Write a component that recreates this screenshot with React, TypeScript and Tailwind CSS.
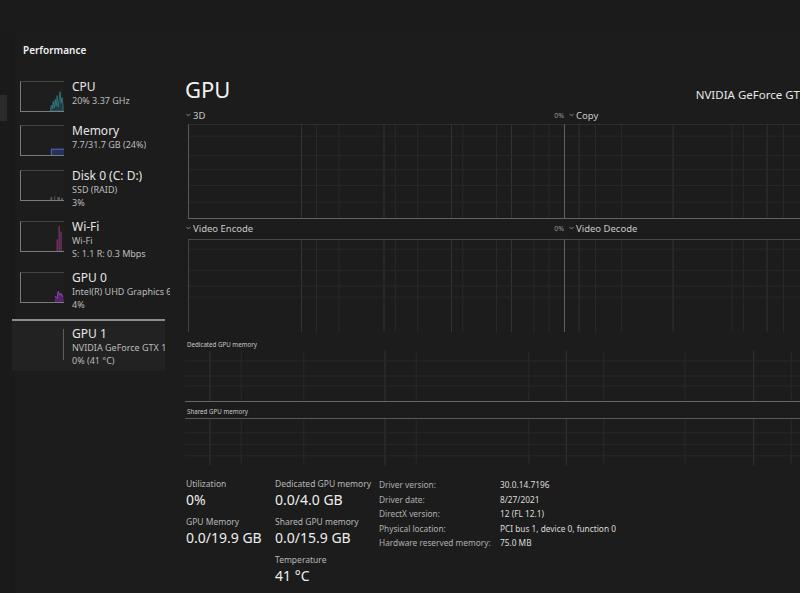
import React from "react";

const FONT = { fontFamily: '"Noto Sans", "Open Sans", sans-serif' };

function Grid({ v, h, className }: { v: number[]; h: number[]; className?: string }) {
  return (
    <svg className={className} viewBox="0 0 100 100" preserveAspectRatio="none">
      {v.map((x, i) => (
        <line key={"v" + i} x1={x} y1={0} x2={x} y2={100} stroke={i % 3 === 0 ? "#333333" : "#292929"} strokeWidth={1} vectorEffect="non-scaling-stroke" />
      ))}
      {h.map((y, i) => (
        <line key={"h" + i} x1={0} y1={y} x2={100} y2={y} stroke="#282828" strokeWidth={1} vectorEffect="non-scaling-stroke" />
      ))}
    </svg>
  );
}

function Thumb({ kind }: { kind: string }) {
  return (
    <div className="w-[44px] h-[31px] border-l border-b border-t border-l-[#7a7a7a] border-b-[#7a7a7a] border-t-[#444444] bg-[#1e1e1e] shrink-0">
      <svg className="w-full h-full" viewBox="0 0 44 30" preserveAspectRatio="none">
        {kind === "cpu" && (
          <path d="M30 30 L31 24 L32 28 L33 20 L34 27 L35 18 L36 25 L37 14 L38 26 L39 19 L40 10 L41 22 L42 16 L43 24 L43 30 Z" fill="#1c3c40" stroke="#35808a" strokeWidth="0.8" />
        )}
        {kind === "mem" && (
          <g>
            <rect x="31" y="24" width="13" height="6" fill="#26325c" />
            <line x1="31" y1="24" x2="44" y2="24" stroke="#5a70bd" strokeWidth="1" />
            <line x1="31" y1="24" x2="31" y2="30" stroke="#5a70bd" strokeWidth="1" />
          </g>
        )}
        {kind === "disk" && (
          <g fill="#555555">
            <rect x="30" y="27" width="2" height="3" />
            <rect x="34" y="26" width="1" height="4" />
            <rect x="37" y="27" width="3" height="3" />
            <rect x="41" y="28" width="2" height="2" />
          </g>
        )}
        {kind === "wifi" && (
          <g stroke="#9c3c80" strokeWidth="1">
            <line x1="39" y1="4" x2="39" y2="30" />
            <line x1="41" y1="10" x2="41" y2="30" />
            <line x1="37" y1="18" x2="37" y2="30" />
          </g>
        )}
        {kind === "gpu0" && (
          <g>
            <path d="M34 30 L35 24 L37 26 L38 19 L40 23 L41 21 L43 25 L44 30 Z" fill="#552470" />
            <path d="M35 24 L37 26 L38 19 L40 23 L41 21 L43 25" stroke="#9046bb" fill="none" strokeWidth="1" />
          </g>
        )}
      </svg>
    </div>
  );
}

function SideItem({ kind, title, lines, h }: { kind: string; title: string; lines: string[]; h: string }) {
  return (
    <div className={`flex items-start gap-[8px] pl-[5px] ${h}`}>
      <Thumb kind={kind} />
      <div className="flex flex-col -mt-[2px] whitespace-nowrap overflow-hidden">
        <div className="text-[12px] leading-[15px] text-[#e6e6e6]">{title}</div>
        {lines.map((l) => (
          <div key={l} className="text-[9px] leading-[13px] text-[#bcbcbc]">{l}</div>
        ))}
      </div>
    </div>
  );
}

function Chevron() {
  return (
    <svg width="5" height="4" viewBox="0 0 5 4" className="mb-[3px]">
      <path d="M0.5 0.8 L2.5 3 L4.5 0.8" stroke="#8a8a8a" strokeWidth="0.9" fill="none" />
    </svg>
  );
}

function EngineLabel({ name }: { name: string }) {
  return (
    <div className="flex items-center gap-[2px] text-[9.5px] leading-[14px] text-[#c8c8c8]">
      <Chevron />
      <span>{name}</span>
    </div>
  );
}

const V1 = [30, 34, 40, 52, 55, 61, 70, 73, 82, 86, 92, 96];
const H1 = [12, 33, 48, 65, 83];
const V2 = [6, 13, 24, 46, 71, 76, 86, 93];
const VM = [4, 9, 19, 32, 37, 55, 61, 67, 80, 91, 97];
const HM = [20, 50, 70];

export default function App() {
  return (
    <div style={FONT} className="w-[800px] h-[593px] bg-[#1a1a1a] overflow-hidden flex flex-col">
      <div className="h-[33px] shrink-0 bg-[#1b1b1b]" />
      <div className="flex flex-1 min-h-0">
        {/* nav rail */}
        <div className="w-[15px] shrink-0 flex flex-col">
          <div className="h-[62px]" />
          <div className="w-[7px] h-[26px] bg-[#2a2a2a]" />
        </div>
        {/* panel */}
        <div className="flex-1 bg-[#1c1c1c] flex flex-col min-w-0">
          <div className="h-[37px] shrink-0 pl-[8px] pt-[10px] text-[10px] font-semibold text-[#f0f0f0] leading-[14px]">Performance</div>
          <div className="flex flex-1 min-h-0">
            {/* sidebar */}
            <div className="w-[155px] shrink-0 pt-[11px] flex flex-col">
              <SideItem kind="cpu" title="CPU" lines={["20%  3.37 GHz"]} h="h-[44px]" />
              <SideItem kind="mem" title="Memory" lines={["7.7/31.7 GB (24%)"]} h="h-[45px]" />
              <SideItem kind="disk" title="Disk 0 (C: D:)" lines={["SSD (RAID)", "3%"]} h="h-[51px]" />
              <SideItem kind="wifi" title="Wi-Fi" lines={["Wi-Fi", "S: 1.1  R: 0.3 Mbps"]} h="h-[51px]" />
              <SideItem kind="gpu0" title="GPU 0" lines={["Intel(R) UHD Graphics 6", "4%"]} h="h-[47px]" />
              <div className="-ml-[3px] w-[153px] h-[52px] bg-[#222222] border-t-2 border-[#8c8c8c] flex items-start gap-[8px] pt-[5px]">
                <div className="w-[52px] h-[31px] border-r border-[#5e5e5e] shrink-0 mt-[3px]" />
                <div className="flex flex-col whitespace-nowrap overflow-hidden">
                  <div className="text-[12px] leading-[15px] text-[#e6e6e6]">GPU 1</div>
                  <div className="text-[9px] leading-[13px] text-[#bcbcbc]">NVIDIA GeForce GTX 1050</div>
                  <div className="text-[9px] leading-[13px] text-[#bcbcbc]">0%  (41 °C)</div>
                </div>
              </div>
            </div>
            {/* main */}
            <div className="flex-1 min-w-0 pl-[15px] flex flex-col overflow-hidden">
              <div className="flex items-end justify-between h-[33px] whitespace-nowrap">
                <div className="text-[22px] leading-[28px] text-[#f2f2f2]">GPU</div>
                <div className="text-[11.5px] leading-[16px] text-[#e8e8e8] -mr-[36px]">NVIDIA GeForce GTX 1050</div>
              </div>
              <div className="grid grid-cols-[379px_1fr] mt-[6px]">
                {/* row 1 */}
                <div className="flex flex-col">
                  <div className="flex justify-between items-end h-[14px] pl-[1px]">
                    <EngineLabel name="3D" />
                    <span className="text-[7px] text-[#9a9a9a] leading-[14px]">0%</span>
                  </div>
                  <div className="ml-[3px] h-[95px] mt-[1px] border-l border-b border-t border-l-[#585858] border-b-[#626262] border-t-[#2e2e2e]">
                    <Grid v={V1} h={H1} className="w-full h-full" />
                  </div>
                </div>
                <div className="flex flex-col">
                  <div className="pl-[5px] h-[14px]">
                    <EngineLabel name="Copy" />
                  </div>
                  <div className="h-[95px] mt-[1px] border-l border-b border-t border-l-[#626262] border-b-[#626262] border-t-[#2e2e2e]">
                    <Grid v={V2} h={H1} className="w-full h-full" />
                  </div>
                </div>
                {/* row 2 */}
                <div className="flex flex-col mt-[3px]">
                  <div className="flex justify-between items-end h-[14px] pl-[1px]">
                    <EngineLabel name="Video Encode" />
                    <span className="text-[7px] text-[#9a9a9a] leading-[14px]">0%</span>
                  </div>
                  <div className="ml-[3px] h-[93px] mt-[3px] border-l border-t border-l-[#444444] border-t-[#484848]">
                    <Grid v={V1} h={[10, 33, 50, 62]} className="w-full h-full" />
                  </div>
                </div>
                <div className="flex flex-col mt-[3px]">
                  <div className="pl-[5px] h-[14px]">
                    <EngineLabel name="Video Decode" />
                  </div>
                  <div className="h-[93px] mt-[3px] border-l border-t border-l-[#626262] border-t-[#484848]">
                    <Grid v={V2} h={[10, 33, 50, 62]} className="w-full h-full" />
                  </div>
                </div>
              </div>

              {/* memory graphs */}
              <div className="mt-[7px] pl-[2px] text-[6.2px] leading-[12px] text-[#c8c8c8]">Dedicated GPU memory</div>
              <div className="h-[51px] -mr-[10px] border-b border-[#666666]">
                <Grid v={VM} h={HM} className="w-full h-full" />
              </div>
              <div className="mt-[4px] pl-[2px] text-[6.2px] leading-[12px] text-[#c8c8c8]">Shared GPU memory</div>
              <div className="h-[47px] -mr-[10px] border-t border-[#585858]">
                <Grid v={VM} h={[30, 55, 80]} className="w-full h-full" />
              </div>

              {/* stats */}
              <div className="flex items-start mt-[13px] pl-[1px] whitespace-nowrap">
                <div className="w-[89px] flex flex-col">
                  <div className="text-[8.5px] leading-[12px] text-[#b8b8b8]">Utilization</div>
                  <div className="text-[14px] leading-[20px] text-[#eeeeee]">0%</div>
                  <div className="text-[8.5px] leading-[12px] text-[#b8b8b8] mt-[6px]">GPU Memory</div>
                  <div className="text-[14px] leading-[20px] text-[#eeeeee]">0.0/19.9 GB</div>
                </div>
                <div className="w-[104px] flex flex-col">
                  <div className="text-[8.5px] leading-[12px] text-[#b8b8b8]">Dedicated GPU memory</div>
                  <div className="text-[14px] leading-[20px] text-[#eeeeee]">0.0/4.0 GB</div>
                  <div className="text-[8.5px] leading-[12px] text-[#b8b8b8] mt-[6px]">Shared GPU memory</div>
                  <div className="text-[14px] leading-[20px] text-[#eeeeee]">0.0/15.9 GB</div>
                  <div className="text-[8.5px] leading-[12px] text-[#b8b8b8] mt-[6px]">Temperature</div>
                  <div className="text-[14px] leading-[20px] text-[#eeeeee]">41 °C</div>
                </div>
                <div className="grid grid-cols-[121px_auto] content-start text-[8.3px] leading-[14.5px]">
                  <span className="text-[#b0b0b0]">Driver version:</span>
                  <span className="text-[#dcdcdc]">30.0.14.7196</span>
                  <span className="text-[#b0b0b0]">Driver date:</span>
                  <span className="text-[#dcdcdc]">8/27/2021</span>
                  <span className="text-[#b0b0b0]">DirectX version:</span>
                  <span className="text-[#dcdcdc]">12 (FL 12.1)</span>
                  <span className="text-[#b0b0b0]">Physical location:</span>
                  <span className="text-[#dcdcdc]">PCI bus 1, device 0, function 0</span>
                  <span className="text-[#b0b0b0]">Hardware reserved memory:</span>
                  <span className="text-[#dcdcdc]">75.0 MB</span>
                </div>
              </div>
            </div>
          </div>
        </div>
      </div>
    </div>
  );
}
